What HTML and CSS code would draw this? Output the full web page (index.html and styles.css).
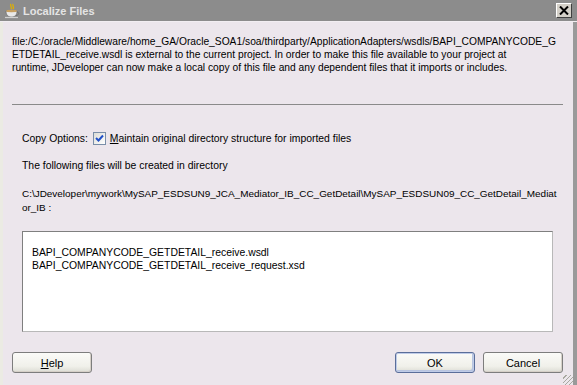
FILE: index.html
```html
<!DOCTYPE html>
<html>
<head>
<meta charset="utf-8">
<title>Localize Files</title>
<link rel="stylesheet" href="styles.css">
</head>
<body>
<div class="window">
  <div class="titlebar">
    <svg class="app-icon" width="16" height="16" viewBox="0 0 16 16">
      <path d="M7 1 C5 3 9 4 7 6 M9 1 C8 3 11 4 9 6" stroke="#e0b000" stroke-width="1.3" fill="none"/>
      <path d="M2 8 H13 C13 12 11 14 7.5 14 C4 14 2 12 2 8 Z" fill="#e8e8e8" stroke="#6e6e6e" stroke-width="0.8"/>
      <path d="M13 9 C15.5 9 15.5 12 12 12.5" stroke="#6e6e6e" stroke-width="1" fill="none"/>
      <ellipse cx="7.5" cy="8" rx="5.5" ry="1.2" fill="#c8a060"/>
      <path d="M1 14.5 H14" stroke="#d0d0d0" stroke-width="1.2"/>
    </svg>
    <span class="title">Localize Files</span>
    <span class="close">
      <svg width="10" height="9" viewBox="0 0 10 9"><path d="M1 0.5 L9 8.5 M9 0.5 L1 8.5" stroke="#000" stroke-width="2"/></svg>
    </span>
  </div>
  <div class="content">
    <p class="intro">file:/C:/oracle/Middleware/home_GA/Oracle_SOA1/soa/thirdparty/ApplicationAdapters/wsdls/BAPI_COMPANYCODE_G<br>ETDETAIL_receive.wsdl is external to the current project. In order to make this file available to your project at<br>runtime, JDeveloper can now make a local copy of this file and any dependent files that it imports or includes.</p>
    <hr class="separator">
    <div class="options">
      <div class="copy-row">
        <span class="label">Copy Options:</span>
        <span class="checkbox"><svg width="9" height="9" viewBox="0 0 9 9"><path d="M1 4 L3.5 6.5 L8 1.5" stroke="#2150c8" stroke-width="2" fill="none"/></svg></span>
        <span><u>M</u>aintain original directory structure for imported files</span>
      </div>
      <p class="line">The following files will be created in directory</p>
      <p class="path">C:\JDeveloper\mywork\MySAP_ESDSUN9_JCA_Mediator_IB_CC_GetDetail\MySAP_ESDSUN09_CC_GetDetail_Mediat<br>or_IB :</p>
      <div class="listbox">
        <div>BAPI_COMPANYCODE_GETDETAIL_receive.wsdl</div>
        <div>BAPI_COMPANYCODE_GETDETAIL_receive_request.xsd</div>
      </div>
    </div>
    <div class="buttons">
      <button class="btn"><u>H</u>elp</button>
      <span class="spacer"></span>
      <button class="btn default">OK</button>
      <button class="btn">Cancel</button>
    </div>
  </div>
  <span class="grip"></span>
</div>
</body>
</html>
```
FILE: styles.css
```css
html, body {
  margin: 0;
  padding: 0;
}
body {
  width: 577px;
  height: 385px;
  overflow: hidden;
  font-family: "Liberation Sans", Arial, sans-serif;
  font-size: 10.4px;
  color: #000;
  background: #ece6ec;
}
.window {
  position: relative;
  width: 577px;
  height: 385px;
  box-sizing: border-box;
  border-left: 3px solid #ebebe3;
  border-right: 4px solid #9a9a9a;
  display: flex;
  flex-direction: column;
  background: #ece6ec;
}
.titlebar {
  height: 21px;
  margin-left: -3px;
  margin-right: -4px;
  background: #8c8c8c;
  display: flex;
  align-items: center;
  padding: 0 5px 0 4px;
  border-bottom: 1px solid #f2eef2;
}
.app-icon {
  flex: none;
}
.title {
  margin-left: 3px;
  font-family: "Liberation Sans", Arial, sans-serif;
  font-weight: bold;
  font-size: 11px;
  color: #e4e4e4;
  flex: 1;
}
.close {
  width: 14px;
  height: 13px;
  background: #d4d0c8;
  border: 1px solid;
  border-color: #fff #404040 #404040 #fff;
  display: flex;
  align-items: center;
  justify-content: center;
}
.content {
  flex: 1;
  display: flex;
  flex-direction: column;
  padding: 0 10px 0 9px;
}
.intro {
  margin: 13px 0 0;
  line-height: 13px;
  white-space: nowrap;
  font-size: 10.25px;
}
.separator {
  margin: 30px 0 0;
  border: 0;
  border-top: 1px solid #8a8a8a;
  height: 0;
}
.options {
  padding: 0 10px;
}
.copy-row {
  margin-top: 27px;
  display: flex;
  align-items: center;
  height: 13px;
  line-height: 13px;
}
.label {
  margin-right: 5px;
}
.checkbox {
  width: 11px;
  height: 11px;
  border: 1px solid #7a8ea8;
  background: linear-gradient(135deg, #dcdcd6, #fff);
  display: flex;
  align-items: center;
  justify-content: center;
  margin-right: 4px;
}
.line {
  margin: 14px 0 0;
  line-height: 13px;
}
.path {
  margin: 15px 0 0;
  line-height: 14px;
  white-space: nowrap;
  font-size: 9.95px;
}
.listbox {
  margin-top: 16px;
  height: 101px;
  background: #fff;
  border: 1px solid #7f7f7f;
  border-right-color: #b8b8b8;
  border-bottom-color: #b8b8b8;
  padding: 14px 0 0 9px;
  box-sizing: border-box;
  line-height: 13px;
}
.buttons {
  margin-top: 20px;
  display: flex;
  gap: 8px;
}
.spacer {
  flex: 1;
}
.btn {
  width: 80px;
  height: 21px;
  font-family: inherit;
  font-size: 11px;
  color: #000;
  padding: 0;
  border: 1px solid #7d7d7d;
  border-radius: 3px;
  background: linear-gradient(#fbfbf8, #f0f0ea 70%, #dcdcd4);
  box-shadow: inset -1px -1px 0 #d6d0c8;
}
.btn.default {
  border-color: #5a6e9a;
  box-shadow: inset 0 0 0 1px #c0cce8, inset -2px -2px 0 #b8c4e0;
}
.grip {
  position: absolute;
  right: 0;
  bottom: 0;
  width: 10px;
  height: 10px;
  background: repeating-linear-gradient(135deg, transparent 0 2px, #a8a8a0 2px 3px);
}
```
